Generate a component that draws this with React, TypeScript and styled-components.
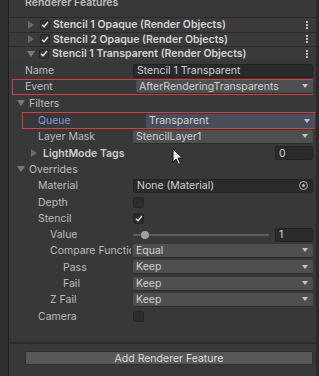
import React from "react";
import styled, { createGlobalStyle, css } from "styled-components";

const GlobalStyle = createGlobalStyle`
  html, body {
    margin: 0;
    padding: 0;
    background: #383838;
    overflow: hidden;
  }
  * { box-sizing: border-box; }
`;

//#region styles
const Frame = styled.div`
  position: relative;
  width: 319px;
  height: 376px;
  display: flex;
  font-family: Inter, "Noto Sans", sans-serif;
  font-size: 10.5px;
  color: #c2c2c2;
  background: #383838;
  overflow: hidden;
`;

const Gutter = styled.div`
  width: 9px;
  background: #303030;
  border-right: 1px solid #1f1f1f;
`;

const Main = styled.div`
  flex: 1;
  display: flex;
  flex-direction: column;
  border-right: 1px solid #262626;
  padding-right: 3px;
`;

const Edge = styled.div`
  width: 2px;
  background: #2b2b2b;
`;

const Header = styled.div`
  height: 17px;
  padding-left: 16px;
  font-weight: 600;
  color: #bdbdbd;
  line-height: 6px;
  overflow: hidden;
`;

const FeatureRow = styled.div`
  height: 14.5px;
  display: flex;
  align-items: center;
  border-top: 1px solid #2a2a2a;
  background: #3a3a3a;
  padding-left: 18px;
  margin-right: -3px;
  font-weight: 600;
  color: #d4d4d4;
  &:last-of-type {
    border-bottom: 1px solid #2a2a2a;
  }
`;

const Arrow = styled.span<{ $open?: boolean }>`
  width: 0;
  height: 0;
  flex: 0 0 auto;
  ${(p) =>
    p.$open
      ? css`
          border-left: 4px solid transparent;
          border-right: 4px solid transparent;
          border-top: 6px solid #7a7a7a;
          margin: 0 4px 0 0;
        `
      : css`
          border-top: 4px solid transparent;
          border-bottom: 4px solid transparent;
          border-left: 6px solid #6a6a6a;
          margin: 0 6px 0 1px;
        `}
`;

const Kebab = styled.span`
  margin-left: auto;
  margin-right: 8px;
  display: flex;
  flex-direction: column;
  gap: 1px;
  & > i {
    width: 2px;
    height: 2px;
    background: #bdbdbd;
  }
`;

const Props = styled.div`
  padding-top: 2px;
  display: flex;
  flex-direction: column;
`;

const Row = styled.div<{ $mark?: boolean; $ml?: number; $mr?: number; $mt?: number }>`
  height: 16.3px;
  display: grid;
  grid-template-columns: 124px 1fr;
  align-items: center;
  margin-left: ${(p) => p.$ml ?? 0}px;
  margin-right: ${(p) => p.$mr ?? 0}px;
  margin-top: ${(p) => p.$mt ?? 0}px;
  ${(p) =>
    p.$mark &&
    css`
      box-shadow: inset 0 0 0 1px #cf4147;
    `}
`;

const Label = styled.div<{ $indent: number; $blue?: boolean; $bold?: boolean }>`
  padding-left: ${(p) => p.$indent}px;
  margin-right: 2px;
  display: flex;
  align-items: center;
  white-space: nowrap;
  overflow: hidden;
  color: ${(p) => (p.$blue ? "#7f99de" : p.$bold ? "#cfcfcf" : "#bcbcbc")};
  font-weight: ${(p) => (p.$bold ? 600 : 400)};
`;

const Field = styled.div<{ $kind: "text" | "drop" | "sel" }>`
  height: 14px;
  display: flex;
  align-items: center;
  padding-left: 3px;
  padding-right: 5px;
  border-radius: 2px;
  white-space: nowrap;
  overflow: hidden;
  color: #d0d0d0;
  ${(p) =>
    p.$kind === "text"
      ? css`
          background: #2a2a2a;
          border: 1px solid #232323;
        `
      : p.$kind === "sel"
      ? css`
          background: #4a4e5c;
        `
      : css`
          background: #4f4f4f;
          border-bottom: 1px solid #2c2c2c;
        `}
`;

const DropArrow = styled.span`
  margin-left: auto;
  width: 0;
  height: 0;
  border-left: 3px solid transparent;
  border-right: 3px solid transparent;
  border-top: 4px solid #c4c4c4;
`;

const Picker = styled.span`
  margin-left: auto;
  margin-right: -1px;
  width: 9px;
  height: 9px;
  border: 1.5px solid #b5b5b5;
  border-radius: 50%;
  display: flex;
  align-items: center;
  justify-content: center;
  &::after {
    content: "";
    width: 3px;
    height: 3px;
    border-radius: 50%;
    background: #b5b5b5;
  }
`;

const Check = styled.span`
  width: 11px;
  height: 11px;
  border-radius: 2px;
  background: #2c2c2c;
  border: 1px solid #262626;
  display: flex;
  align-items: center;
  justify-content: center;
`;

const MiniCheck = styled(Check)`
  width: 10px;
  height: 10px;
  background: #353535;
  margin-right: 3px;
`;

const Split = styled.div`
  display: flex;
  align-items: center;
  gap: 6px;
`;

const Track = styled.div`
  flex: 1;
  height: 14px;
  position: relative;
  display: flex;
  align-items: center;
  &::before {
    content: "";
    flex: 1;
    height: 2px;
    background: #5d5d5d;
    border-radius: 1px;
  }
`;

const Knob = styled.span`
  position: absolute;
  left: 8px;
  top: 3px;
  width: 8px;
  height: 8px;
  border-radius: 50%;
  background: #a0a0a0;
`;

const IntField = styled(Field)`
  width: 38px;
  flex: 0 0 auto;
`;

const Footer = styled.div`
  margin-top: auto;
  margin-right: -3px;
  height: 34px;
  border-top: 2px solid #2b2b2b;
  padding: 7px 3px 0 16px;
`;

const AddButton = styled.div`
  height: 14px;
  background: #585858;
  border: 1px solid #2f2f2f;
  border-radius: 2px;
  display: flex;
  align-items: center;
  justify-content: center;
  color: #dcdcdc;
`;

const Cursor = styled.svg`
  position: absolute;
  left: 172px;
  top: 148px;
`;
//#endregion styles

const Tick = () => (
  <svg width="8" height="7" viewBox="0 0 8 7">
    <path d="M1 3.8 L3 5.8 L7 1" fill="none" stroke="#e6e6e6" strokeWidth="1.4" />
  </svg>
);

const features = [
  { name: "Stencil 1 Opaque (Render Objects)", open: false },
  { name: "Stencil 2 Opaque (Render Objects)", open: false },
  { name: "Stencil 1 Transparent (Render Objects)", open: true },
];

const Dropdown = ({ value, sel }: { value: string; sel?: boolean }) => (
  <Field $kind={sel ? "sel" : "drop"}>
    {value}
    <DropArrow />
  </Field>
);

export default function App() {
  return (
    <>
      <GlobalStyle />
      <Frame>
        <Gutter />
        <Main>
          <Header>Renderer Features</Header>
          {features.map((f) => (
            <FeatureRow key={f.name}>
              <Arrow $open={f.open} />
              <MiniCheck>
                <Tick />
              </MiniCheck>
              {f.name}
              <Kebab>
                <i />
                <i />
                <i />
              </Kebab>
            </FeatureRow>
          ))}
          <Props>
            <Row>
              <Label $indent={16}>Name</Label>
              <Field $kind="text">Stencil 1 Transparent</Field>
            </Row>
            <Row $mark $ml={3}>
              <Label $indent={13}>Event</Label>
              <Dropdown value="AfterRenderingTransparents" />
            </Row>
            <Row>
              <Label $indent={8}>
                <Arrow $open />
                Filters
              </Label>
            </Row>
            <Row $mark $ml={13} $mr={-2} $mt={1}>
              <Label $indent={16} $blue>
                Queue
              </Label>
              <Dropdown value="Transparent" sel />
            </Row>
            <Row>
              <Label $indent={29}>Layer Mask</Label>
              <Dropdown value="StencilLayer1" />
            </Row>
            <Row>
              <Label $indent={21} $bold>
                <Arrow />
                LightMode Tags
              </Label>
              <Split>
                <span style={{ flex: 1 }} />
                <IntField $kind="text">0</IntField>
              </Split>
            </Row>
            <Row>
              <Label $indent={8}>
                <Arrow $open />
                Overrides
              </Label>
            </Row>
            <Row>
              <Label $indent={29}>Material</Label>
              <Field $kind="text">
                None (Material)
                <Picker />
              </Field>
            </Row>
            <Row>
              <Label $indent={29}>Depth</Label>
              <Check />
            </Row>
            <Row>
              <Label $indent={29}>Stencil</Label>
              <Check>
                <Tick />
              </Check>
            </Row>
            <Row>
              <Label $indent={41}>Value</Label>
              <Split>
                <Track>
                  <Knob />
                </Track>
                <IntField $kind="text">1</IntField>
              </Split>
            </Row>
            <Row>
              <Label $indent={41}>Compare Function</Label>
              <Dropdown value="Equal" />
            </Row>
            <Row>
              <Label $indent={54}>Pass</Label>
              <Dropdown value="Keep" />
            </Row>
            <Row>
              <Label $indent={54}>Fail</Label>
              <Dropdown value="Keep" />
            </Row>
            <Row>
              <Label $indent={41}>Z Fail</Label>
              <Dropdown value="Keep" />
            </Row>
            <Row>
              <Label $indent={29}>Camera</Label>
              <Check />
            </Row>
          </Props>
          <Footer>
            <AddButton>Add Renderer Feature</AddButton>
          </Footer>
        </Main>
        <Edge />
        <Cursor width="12" height="18" viewBox="0 0 12 18">
          <path d="M1 1 L1 14 L4 11 L6.5 16.5 L8.5 15.5 L6 10 L10.5 10 Z" fill="#e8e8e8" stroke="#111" strokeWidth="1" />
        </Cursor>
      </Frame>
    </>
  );
}
